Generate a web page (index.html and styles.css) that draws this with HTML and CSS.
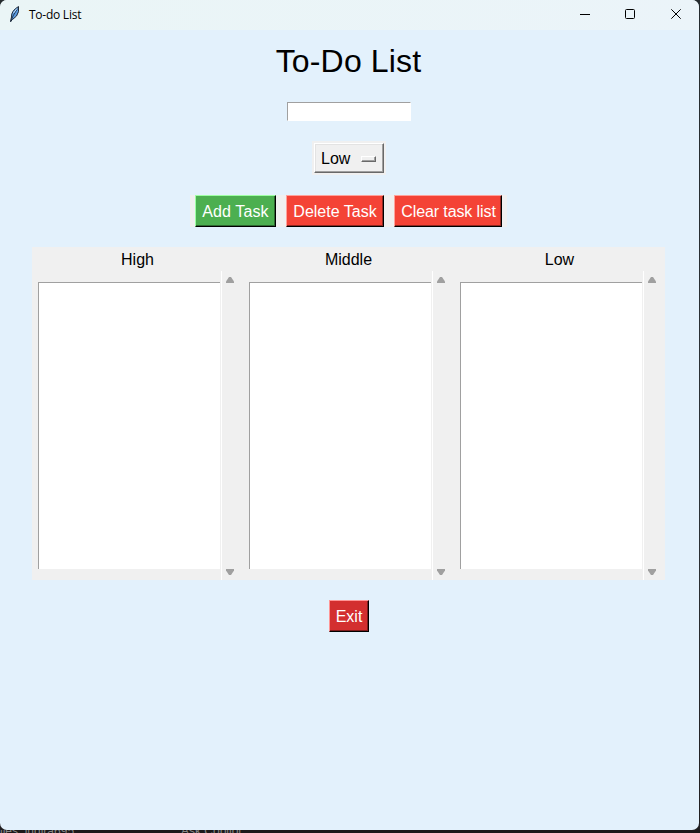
FILE: index.html
```html
<!DOCTYPE html>
<html lang="en">
<head>
<meta charset="utf-8">
<title>To-do List</title>
<link rel="stylesheet" href="styles.css">
</head>
<body>
<div class="window">
  <header class="titlebar">
    <svg class="feather" width="12" height="18" viewBox="0 0 12 18"><path d="M1.5 16.5 2.5 12Q2 6 9.5 1.5Q10.5 7 7.5 11L3.5 14.5Z" fill="#5b9be0" stroke="#202a38"/><path d="M1.7 17 4 11 8.5 3.5" fill="none" stroke="#17263b" stroke-width=".8"/><path d="M4.5 8 8 3.5" stroke="#c5e2ff" stroke-width="1"/></svg>
    <span class="caption">To-do List</span>
    <svg class="controls" width="102" height="12" viewBox="0 0 102 12" fill="none" stroke="#000"><path d="M0 6.5H10"/><rect x="45.5" y="1.5" width="9" height="9" rx="1"/><path d="M91.3 1.3 100.7 10.7M100.7 1.3 91.3 10.7"/></svg>
  </header>
  <main class="content">
    <h1>To-Do List</h1>
    <input class="entry" aria-label="Task">
    <div class="option-wrap"><button class="option">Low<span class="indicator"></span></button></div>
    <div class="actions">
      <button class="btn add">Add Task</button>
      <button class="btn del">Delete Task</button>
      <button class="btn clear">Clear task list</button>
    </div>
    <div class="lists">
      <section class="column"><h2>High</h2><div class="body"><div class="listbox"></div><div class="scroll"><svg width="8" height="6"><path d="M0 6V4.5L3 0H5L8 4.5V6Z"/></svg><svg width="8" height="6"><path d="M0 0V1.5L3 6H5L8 1.5V0Z"/></svg></div></div></section>
      <section class="column"><h2>Middle</h2><div class="body"><div class="listbox"></div><div class="scroll"><svg width="8" height="6"><path d="M0 6V4.5L3 0H5L8 4.5V6Z"/></svg><svg width="8" height="6"><path d="M0 0V1.5L3 6H5L8 1.5V0Z"/></svg></div></div></section>
      <section class="column"><h2>Low</h2><div class="body"><div class="listbox"></div><div class="scroll"><svg width="8" height="6"><path d="M0 6V4.5L3 0H5L8 4.5V6Z"/></svg><svg width="8" height="6"><path d="M0 0V1.5L3 6H5L8 1.5V0Z"/></svg></div></div></section>
    </div>
    <button class="btn exit">Exit</button>
  </main>
</div>
<footer class="behind"><span class="files">iles_indira695</span><span>Ask Copilot</span></footer>
</body>
</html>
```

FILE: styles.css
```css
* { box-sizing: border-box; }
body {
  margin: 0;
  height: 833px;
  overflow: hidden;
  background: linear-gradient(#252b2e, #2d3337 60%, #211e20);
  font: 16px "Liberation Sans", Arial, sans-serif;
  color: #000;
}
.window {
  width: 699px;
  height: 830px;
  background: #e3f1fc;
  border-radius: 7px;
  overflow: hidden;
}
.content {
  width: 697px;
  display: flex;
  flex-direction: column;
  align-items: center;
}
.titlebar {
  height: 30px;
  display: flex;
  align-items: center;
  padding: 0 17px 0 9px;
  background: linear-gradient(90deg, #eaf5f6, #ebf4f9);
}
.feather { margin-top: -3px; }
.caption {
  font: 12px "Open Sans", "Noto Sans", sans-serif;
  letter-spacing: -0.25px;
  margin: -2px 0 0 8px;
}
.controls { margin: -2px 0 0 auto; }
h1 {
  margin: 13px 0 0;
  font-size: 32px;
  font-weight: 400;
  line-height: 36px;
  letter-spacing: 0.15px;
}
.entry {
  width: 124px;
  height: 19px;
  margin: 23px 0 0 1px;
  padding: 0 2px;
  border: 1px solid #fff;
  border-top-color: #a0a0a0;
  border-left-color: #a0a0a0;
  background: #fff;
  outline: 0;
}
.option-wrap {
  margin: 20px 0 0 1px;
  padding: 2px;
  background: #f0f0f0;
}
button {
  font: inherit;
  border-radius: 0;
}
.option {
  width: 70px;
  height: 30px;
  display: flex;
  align-items: center;
  justify-content: space-between;
  padding: 1px 7px 0 6px;
  background: #f0f0f0;
  color: #000;
  border: 1px solid #fff;
  border-right-color: #696969;
  border-bottom-color: #696969;
  box-shadow: inset -1px -1px #a0a0a0, inset 1px 1px #e3e3e3;
}
.indicator {
  width: 15px;
  height: 6px;
  border: 1px solid #fff;
  border-right-color: #696969;
  border-bottom-color: #696969;
  box-shadow: inset -1px -1px #a0a0a0;
}
.actions {
  display: flex;
  gap: 10px;
  margin-top: 20px;
  padding: 0 5px;
  background: #f0f0f0;
}
.btn {
  height: 32px;
  padding: 2px 0 0;
  color: #fff;
  border: 1px solid;
}
.add {
  width: 81px;
  letter-spacing: 0.1px;
  background: #4caf50;
  border-color: #9effa4 #000 #000 #9effa4;
  box-shadow: inset -1px -1px #2e6930;
}
.del, .clear {
  background: #f44336;
  border-color: #ffa29b #000 #000 #ffa29b;
  box-shadow: inset -1px -1px #922820;
}
.del { width: 98px; }
.clear { width: 108px; padding-left: 1px; letter-spacing: -0.1px; }
.lists {
  display: flex;
  width: 633px;
  height: 333px;
  margin-top: 20px;
  background: #f0f0f0;
}
.column {
  width: 211px;
  display: flex;
  flex-direction: column;
}
h2 {
  margin: 0;
  height: 24px;
  line-height: 25px;
  font-size: 16px;
  font-weight: 400;
  text-align: center;
}
.body { display: flex; flex: 1; }
.listbox {
  width: 182px;
  margin: 11px 1px 11px 6px;
  background: #fff;
  border-top: 1px solid #a0a0a0;
  border-left: 1px solid #a0a0a0;
}
.scroll {
  width: 17px;
  border-left: 1px solid #fff;
  display: flex;
  flex-direction: column;
  align-items: center;
  justify-content: space-between;
  padding: 6px 0 5px;
}
.scroll svg { fill: #a0a0a0; }
.exit {
  width: 40px;
  margin: 20px 0 0 1px;
  background: #d32f2f;
  border-color: #ff9696 #000 #000 #ff9696;
  box-shadow: inset -1px -1px #7e1c1c;
}
.behind {
  height: 3px;
  display: flex;
  overflow: hidden;
  background: #1c191a;
  color: #858585;
  font-size: 12px;
  line-height: 3px;
}
.files { width: 181px; }
```
